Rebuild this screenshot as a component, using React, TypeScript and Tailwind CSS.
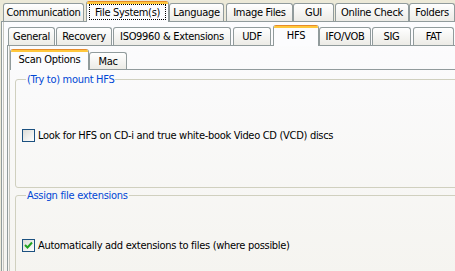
import React from 'react';

type TabProps = { label: string; w: number; ml: number; sel?: boolean; h?: number; focus?: boolean };

const Tab: React.FC<TabProps> = ({ label, w, ml, sel, h = 18, focus }) => {
  if (sel) {
    return (
      <div
        className="relative z-10 -mb-px flex h-[21px] shrink-0 flex-col overflow-hidden rounded-t-[3px] border-x border-[#919b9c] bg-[#fcfcfe]"
        style={{ width: w, marginLeft: ml }}
      >
        <div className="h-px bg-[#e68b2c]" />
        <div className="h-[2px] bg-[#ffc73c]" />
        {focus ? (
          <div className="mx-[2px] mb-[2px] flex flex-1 items-center justify-center border border-dotted border-black leading-[13px]">
            {label}
          </div>
        ) : (
          <div className="flex flex-1 items-start justify-center pt-[1px] leading-[13px]">{label}</div>
        )}
      </div>
    );
  }
  return (
    <div
      className="flex shrink-0 items-center justify-center rounded-t-[3px] border-x border-t border-[#919b9c] bg-gradient-to-b from-white to-[#ecebe6] leading-[13px]"
      style={{ width: w, marginLeft: ml, height: h }}
    >
      {label}
    </div>
  );
};

const Check: React.FC<{ checked?: boolean }> = ({ checked }) => (
  <div className="flex h-[13px] w-[13px] shrink-0 items-center justify-center border border-[#1c5180] bg-gradient-to-br from-[#dcdcd7] to-white">
    {checked && (
      <svg width="9" height="9" viewBox="0 0 9 9">
        <path d="M1 4 L3.5 6.5 L8 1.5" stroke="#21a121" strokeWidth="2" fill="none" />
      </svg>
    )}
  </div>
);

export default function App() {
  return (
    <div
      className="flex h-[271px] w-[455px] flex-col overflow-hidden bg-[#ece9d8] text-[11px] tracking-[-0.3px] text-black"
      style={{ fontFamily: '"DejaVu Sans Condensed", "DejaVu Sans", sans-serif', fontStretch: 'condensed' }}
    >
      {/* top tab row */}
      <div className="flex h-[21px] shrink-0 items-end">
        <Tab label="Communication" w={81} ml={3} />
        <Tab label="File System(s)" w={83} ml={2} sel focus />
        <Tab label="Language" w={55} ml={0} />
        <Tab label="Image Files" w={67} ml={2} />
        <Tab label="GUI" w={41} ml={0} />
        <Tab label="Online Check" w={74} ml={1} />
        <Tab label="Folders" w={46} ml={0} />
      </div>

      <div className="ml-px flex flex-1 flex-col border-l border-t border-[#919b9c] bg-gradient-to-b from-[#fcfcfe] to-[#f4f3ee]">
        {/* second tab row */}
        <div className="ml-px flex flex-1 flex-col border-l border-[#c8c8c0]">
          <div className="flex h-[23px] shrink-0 items-end">
            <Tab label="General" w={47} ml={4} />
            <Tab label="Recovery" w={56} ml={1} />
            <Tab label="ISO9960 & Extensions" w={118} ml={1} />
            <Tab label="UDF" w={38} ml={2} />
            <Tab label="HFS" w={46} ml={2} sel />
            <Tab label="IFO/VOB" w={52} ml={0} />
            <Tab label="SIG" w={39} ml={1} />
            <Tab label="FAT" w={41} ml={2} />
          </div>

          <div className="ml-[3px] flex flex-1 flex-col border-l border-t border-[#919b9c]">
            {/* third tab row */}
            <div className="ml-px flex flex-1 flex-col border-l border-[#c8c8c0]">
              <div className="flex h-[23px] shrink-0 items-end">
                <Tab label="Scan Options" w={79} ml={0} sel />
                <Tab label="Mac" w={38} ml={0} h={17} />
              </div>

              <div className="flex flex-1 flex-col border-t border-[#919b9c] pl-[5px]">
                <fieldset className="mt-[3px] h-[115px] w-[460px] shrink-0 rounded-[3px] border border-[#d0d0bf] pl-[6px]">
                  <legend className="ml-[4px] px-[1px] leading-[13px] text-[#0046d5]">(Try to) mount HFS</legend>
                  <div className="mt-[43px] flex items-center gap-[3px] leading-[13px]">
                    <Check />
                    <span>Look for HFS on CD-i and true white-book Video CD (VCD) discs</span>
                  </div>
                </fieldset>

                <fieldset className="mt-px h-[120px] w-[460px] shrink-0 rounded-[3px] border border-[#d0d0bf] pl-[6px]">
                  <legend className="ml-[4px] px-[1px] leading-[13px] text-[#0046d5]">Assign file extensions</legend>
                  <div className="mt-[37px] flex items-center gap-[3px] leading-[13px]">
                    <Check checked />
                    <span>Automatically add extensions to files (where possible)</span>
                  </div>
                </fieldset>
              </div>
            </div>
          </div>
        </div>
      </div>
    </div>
  );
}
